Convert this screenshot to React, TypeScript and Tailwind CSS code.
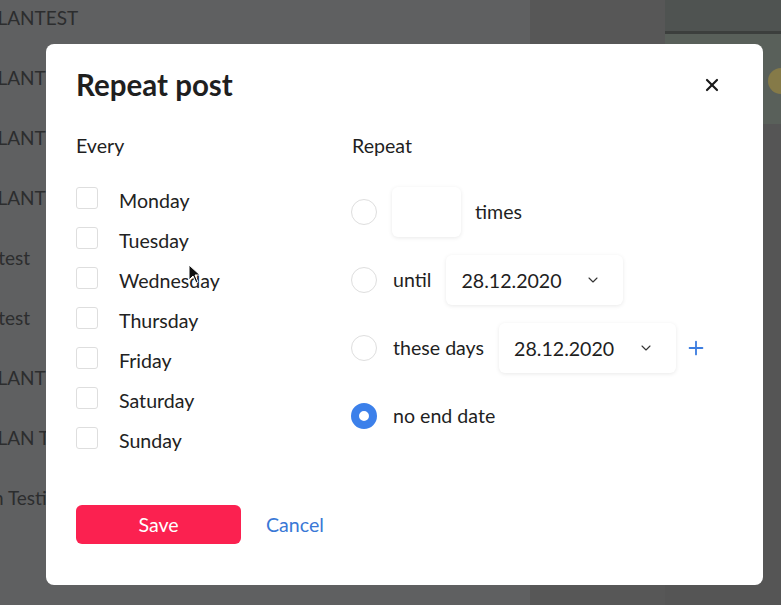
import { X, ChevronDown, Plus } from "lucide-react";

const DAYS = ["Monday", "Tuesday", "Wednesday", "Thursday", "Friday", "Saturday", "Sunday"];

const BACK_ROWS = [
  { t: "PLANTEST", ml: "-ml-[14px]" },
  { t: "PLANTEST", ml: "-ml-[14px]" },
  { t: "PLANTEST", ml: "-ml-[14px]" },
  { t: "PLANTEST", ml: "-ml-[14px]" },
  { t: "Ntest", ml: "-ml-[16px]" },
  { t: "Ntest", ml: "-ml-[16px]" },
  { t: "PLANTEST", ml: "-ml-[14px]" },
  { t: "PLAN TEST", ml: "-ml-[14px]" },
  { t: "n Testing", ml: "-ml-[7px]" },
];

function Radio({ checked }: { checked?: boolean }) {
  if (checked) {
    return <span className="w-[26px] h-[26px] rounded-full border-[8px] border-[#3c80ea] bg-white shrink-0" />;
  }
  return <span className="w-[26px] h-[26px] rounded-full border border-[#dedede] bg-white shrink-0" />;
}

function DateSelect({ value }: { value: string }) {
  return (
    <div className="w-[177px] h-[50px] rounded-md bg-white shadow-[0_1px_4px_rgba(0,0,0,0.09)] flex items-center justify-between pl-[15px] pr-[22px]">
      <span className="text-[19.6px] text-[#1e1e1e] pt-[1px]">{value}</span>
      <ChevronDown className="w-[16px] h-[16px] text-[#333]" strokeWidth={1.6} />
    </div>
  );
}

export default function App() {
  return (
    <div className="relative w-[781px] h-[605px] overflow-hidden font-['Lato',sans-serif]">
      {/* dimmed page behind the dialog */}
      <div className="flex w-full h-full">
        <div className="w-[530px] bg-[#5f6061] flex flex-col pt-[5px]">
          {BACK_ROWS.map((r, i) => (
            <div key={i} className={`h-[60px] text-[19px] leading-[26px] text-[#2c2d2e] whitespace-nowrap ${r.ml}`}>
              {r.t}
            </div>
          ))}
        </div>
        <div className="w-[135px] bg-[#575757]" />
        <div className="flex-1 flex flex-col">
          <div className="h-[34px] bg-[#4f5351] border-b-[3px] border-[#3c3f3d]" />
          <div className="h-[90px] bg-[#59605a] relative">
            <div className="absolute left-[103px] top-[34px] w-[26px] h-[26px] rounded-full bg-[#857a48]" />
          </div>
          <div className="flex-1 bg-[#555555]" />
        </div>
      </div>

      {/* dialog */}
      <div className="absolute left-[46px] top-[44px] w-[717px] h-[541px] bg-white rounded-lg text-[#1f1f1f]">
        <div className="flex items-center justify-between pl-[30px] pr-[41px] pt-[23px]">
          <h2 className="text-[29.5px] leading-[36px] font-bold">Repeat post</h2>
          <X className="w-[20px] h-[20px] text-[#1a1a1a]" strokeWidth={2.6} />
        </div>

        <div className="flex pl-[30px] mt-[30px]">
          <div className="w-[276px] flex flex-col">
            <div className="text-[19.6px] leading-[26px]">Every</div>
            <div className="flex flex-col mt-[19px]">
              {DAYS.map((d) => (
                <label key={d} className="h-[40px] flex items-center">
                  <span className="w-[22px] h-[22px] rounded-[3px] border border-[#dedede] bg-white" />
                  <span className="ml-[21px] pt-[5px] text-[19.6px] text-[#222]">{d}</span>
                </label>
              ))}
            </div>
          </div>

          <div className="flex flex-col">
            <div className="text-[19.6px] leading-[26px]">Repeat</div>
            <div className="flex flex-col gap-[18px] mt-[28px] -ml-[1px]">
              <div className="h-[50px] flex items-center">
                <Radio />
                <div className="ml-[15px] w-[69px] h-[50px] rounded-md bg-white shadow-[0_1px_4px_rgba(0,0,0,0.09)]" />
                <span className="ml-[14px] text-[19.6px]">times</span>
              </div>
              <div className="h-[50px] flex items-center">
                <Radio />
                <span className="ml-[16px] text-[19.6px]">until</span>
                <div className="ml-[15px]">
                  <DateSelect value="28.12.2020" />
                </div>
              </div>
              <div className="h-[50px] flex items-center">
                <Radio />
                <span className="ml-[16px] text-[19.6px]">these days</span>
                <div className="ml-[15px]">
                  <DateSelect value="28.12.2020" />
                </div>
                <Plus className="ml-[9px] w-[22px] h-[22px] text-[#3c7de0]" strokeWidth={2} />
              </div>
              <div className="h-[50px] flex items-center">
                <Radio checked />
                <span className="ml-[16px] text-[19.6px]">no end date</span>
              </div>
            </div>
          </div>
        </div>

        <div className="flex items-center pl-[30px] mt-[47px]">
          <button className="w-[165px] h-[39px] rounded-md bg-[#fb2150] text-white text-[19.6px]">Save</button>
          <button className="ml-[25px] text-[19.6px] text-[#3a78d6]">Cancel</button>
        </div>
      </div>

      {/* mouse pointer */}
      <svg className="absolute left-[188px] top-[264px]" width="14" height="20" viewBox="0 0 14 20">
        <path d="M1 1 L1 16 L5 12 L8 19 L10 18 L7 11 L12 11 Z" fill="#111" stroke="#fff" strokeWidth="1" />
      </svg>
    </div>
  );
}
